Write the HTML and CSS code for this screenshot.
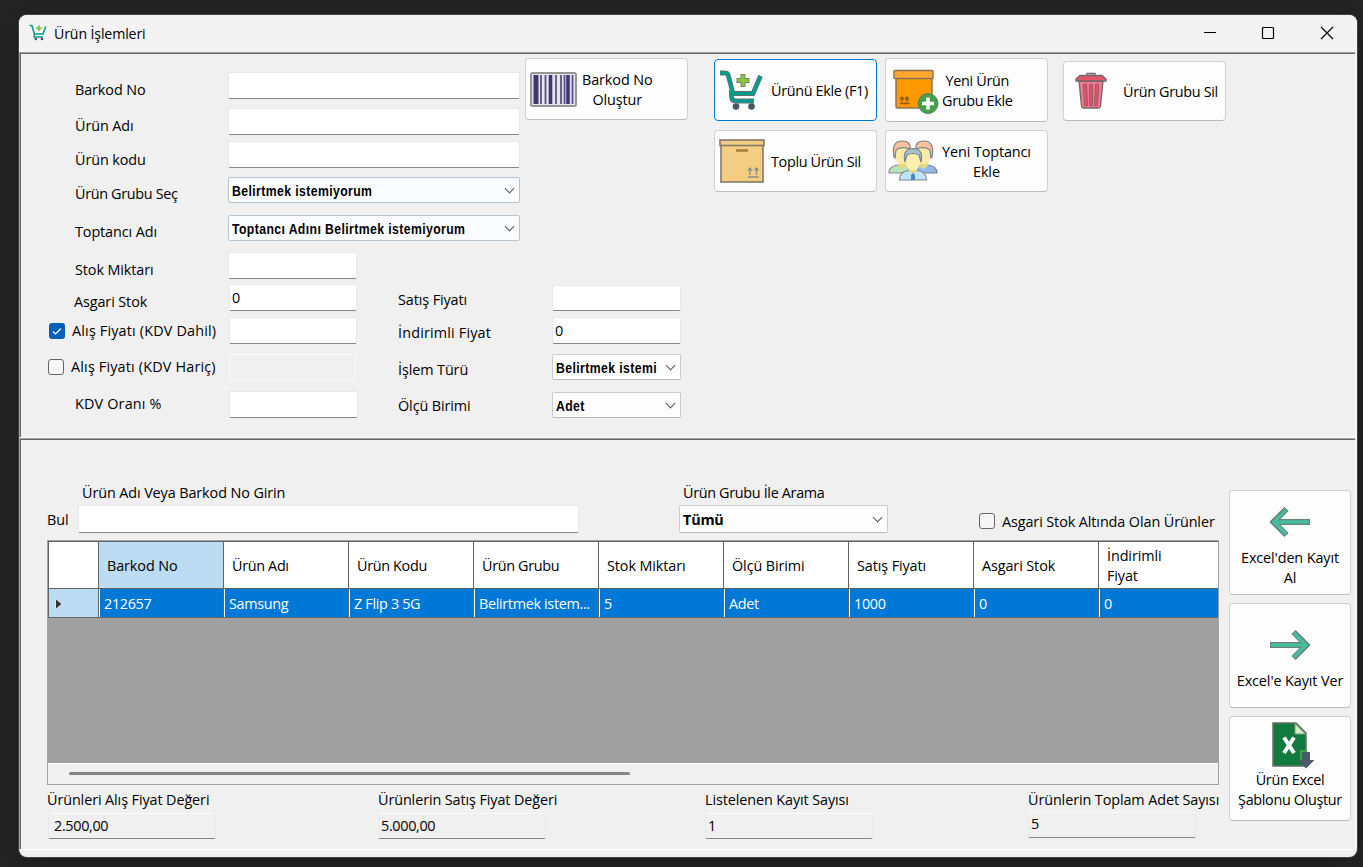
FILE: index.html
```html
<!DOCTYPE html>
<html lang="tr">
<head>
<meta charset="utf-8">
<title>Ürün İşlemleri</title>
<link rel="stylesheet" href="styles.css">
</head>
<body>
<svg class="defs" width="0" height="0">
  <symbol id="cart" viewBox="0 0 44 40">
    <path d="M1 3h5q2.500 0 3.300 2.500L14 23.500H34L41.500 6" fill="none" stroke="#69716f" stroke-width="4.800"/>
    <path d="M12.500 20v6.500q0 4.500 4.500 4.500H35" fill="none" stroke="#69716f" stroke-width="4.800"/>
    <path d="M1 3h5q2.500 0 3.300 2.500L14 23.500H34L41.500 6" fill="none" stroke="#009d8d" stroke-width="3.200"/>
    <path d="M12.500 20v6.500q0 4.500 4.500 4.500H35" fill="none" stroke="#009d8d" stroke-width="3.200"/>
    <path d="M24 4v13M17.500 10.500h13" stroke="#77836a" stroke-width="5"/>
    <path d="M24 5v11M18.500 10.500h11" stroke="#8cc63f" stroke-width="3.200"/>
    <circle cx="17" cy="36.500" r="3.300" fill="#465763"/><circle cx="32.500" cy="36.500" r="3.300" fill="#465763"/>
  </symbol>
</svg>
<main class="window">
  <header class="titlebar">
    <svg class="app-icon" width="18" height="17" viewBox="0 0 18 17"><path d="M.500 1.500h2.300L5.500 10H14l2.800-7.500M5.200 10v3H14" fill="none" stroke="#0a9c8f" stroke-width="1.600"/><path d="M10 1.500v5.500M7.200 4.200h5.600" stroke="#8cc63f" stroke-width="1.900"/><circle cx="6.800" cy="15" r="1.300" fill="#465763"/><circle cx="13" cy="15" r="1.300" fill="#465763"/></svg>
    <h1 class="title">Ürün İşlemleri</h1>
    <div class="controls">
      <svg width="14" height="14" viewBox="0 0 14 14"><path d="M2 6.500h12" stroke="#000"/></svg>
      <svg width="14" height="14" viewBox="0 0 14 14"><rect x="1.500" y="1.500" width="11" height="11" rx="1" fill="none" stroke="#000" stroke-width="1.200"/></svg>
      <svg width="14" height="14" viewBox="0 0 14 14"><path d="M1 1l12 12M13 1L1 13" stroke="#000" stroke-width="1.200"/></svg>
    </div>
  </header>

  <section class="panel entry">
    <div class="form">
      <div class="form-top">
        <div class="fields fields-main">
          <label class="t d7">Barkod No</label><div class="input"></div>
          <label class="t d7">Ürün Adı</label><div class="input"></div>
          <label class="t d8">Ürün kodu</label><div class="input"></div>
          <label class="t d6 n">Ürün Grubu Seç</label>
          <div class="select cool"><span>Belirtmek istemiyorum</span><i class="chev"></i></div>
          <label class="t d6">Toptancı Adı</label>
          <div class="select cool"><span>Toptancı Adını Belirtmek istemiyorum</span><i class="chev"></i></div>
        </div>
        <button class="btn barcode">
          <svg width="47" height="35" viewBox="0 0 47 35"><rect x="1" y="1" width="45" height="33" rx="1.500" fill="#e4e4ec" stroke="#969696" stroke-width="2"/><path d="M5.500 3v29M6.500 3v29" stroke="#42366e" stroke-width="4"/><path d="M11 3v29M15.500 3v29M26 3v29M31 3v29M34.500 3v29M42.500 3v29" stroke="#5a5088" stroke-width="1.800"/><path d="M20.500 3v29M38 3v29" stroke="#42366e" stroke-width="3.600"/></svg>
          <span class="t c">Barkod No<br>Oluştur</span>
        </button>
      </div>
      <div class="fields fields-stock">
        <label class="t d7">Stok Miktarı</label><div class="input"></div><span></span><span></span>
        <label class="t d7 asgari">Asgari Stok</label><div class="input t in">0</div>
        <label class="t d5">Satış Fiyatı</label><div class="input low"></div>
        <label class="t d3 check w"><i class="box on"><svg width="16" height="16" viewBox="0 0 16 16"><path d="M4 8.500l2.500 2.500L12 5.500" fill="none" stroke="#fff" stroke-width="1.200"/></svg></i>Alış Fiyatı (KDV Dahil)</label><div class="input in"></div>
        <label class="t d5 w">İndirimli Fiyat</label><div class="input t near">0</div>
        <label class="t d2 check w"><i class="box"></i>Alış Fiyatı (KDV Hariç)</label><div class="input disabled"></div>
        <label class="t d5">İşlem Türü</label><div class="select"><span>Belirtmek istemi</span><i class="chev"></i></div>
        <label class="t d2 w">KDV Oranı %</label><div class="input shift"></div>
        <label class="t d4">Ölçü Birimi</label><div class="select low"><span>Adet</span><i class="chev"></i></div>
      </div>
    </div>
    <div class="actions">
      <div class="action-col first">
        <button class="btn primary"><svg width="44" height="40"><use href="#cart"/></svg><span class="t n">Ürünü Ekle (F1)</span></button>
        <button class="btn bulk">
          <svg width="46" height="44" viewBox="0 0 46 44"><rect x="2" y="4" width="42" height="39" fill="#f3cd82" stroke="#827a68" stroke-width="1.600"/><rect x="1" y="1" width="44" height="5.500" fill="#f3cd82" stroke="#827a68" stroke-width="1.600"/><path d="M17 11.500h12" stroke="#a57c40" stroke-width="2.400"/><path d="M31 36v-6M37.500 36v-6M29 38h10.500M29 31.500l2-2.500 2 2.500M35.500 31.500l2-2.500 2 2.500" fill="none" stroke="#8d8c82" stroke-width="1.300"/></svg>
          <span class="t n">Toplu Ürün Sil</span></button>
      </div>
      <div class="action-col second">
        <button class="btn tall">
          <svg width="46" height="45" viewBox="0 0 46 45"><rect x="3" y="5" width="36" height="34" rx="1.500" fill="#ff9800" stroke="#8a7558" stroke-width="1.500"/><rect x="1" y="1.500" width="39" height="8" rx="1" fill="#ffa72e" stroke="#8a7558" stroke-width="1.500"/><path d="M9 33v-4M14 33v-4M7 34.500h9.500M7 30.500l2-2.500 2 2.500M12 30.500l2-2.500 2 2.500" fill="none" stroke="#8f5718" stroke-width="1.300"/><circle cx="35" cy="34.500" r="10" fill="#43a047" stroke="#5e8661"/><path d="M35 28.500v12M29 34.500h12" stroke="#fff" stroke-width="3.600"/></svg>
          <span class="t c n">Yeni Ürün<br>Grubu Ekle</span></button>
        <button class="btn people">
          <svg width="50" height="41" viewBox="0 0 50 41" stroke="#7d8589" stroke-width="1.200">
            <path d="M1 33q0-7 9-8l3-2 7 1 3 9z" fill="#bce2b8"/><path d="M49 33q0-7-9-8l-3-2-7 1-3 9z" fill="#90b9ee"/>
            <path d="M10 22h8v4l-4 3-4-2zM32 22h8v4l-4 3-4-2z" fill="#e8d781" stroke="none"/>
            <ellipse cx="14" cy="14" rx="7.500" ry="10.500" fill="#faeaa8" stroke="none"/><ellipse cx="36" cy="14" rx="7.500" ry="10.500" fill="#faeaa8" stroke="none"/>
            <path d="M6 17Q3 1 14 1q9 0 8 8-9-3-14 1l-1 8z" fill="#ffc09c"/><path d="M44 17Q47 1 36 1q-9 0-8 8 9-3 14 1l1 8z" fill="#ffc09c"/>
            <path d="M11.500 40q0-8 8.500-9.500h10q8.500 1.500 8.500 9.500z" fill="#bee4ff"/><path d="M21 27h8v4l-4 3-4-3z" fill="#e8d781" stroke="none"/><ellipse cx="25" cy="21" rx="7.500" ry="9.500" fill="#fdf0ae" stroke="none"/><path d="M17 22Q14 9 25 8.500 36 9 33 22l-2-7q-7-3-12 0z" fill="#a9bfd3"/><path d="M25 33l2 2v5h-4v-5z" fill="#4788c7" stroke="none"/>
          </svg>
          <span class="t c">Yeni Toptancı<br>Ekle</span></button>
      </div>
      <div class="action-col third">
        <button class="btn trash">
          <svg width="32" height="37" viewBox="0 0 32 37" stroke="#76656a" stroke-width="1.300"><path d="M12 4V1.500h8V4" fill="#ddd"/><path d="M4 9h24l-2.500 25q-.3 2-2 2h-15q-1.700 0-2-2z" fill="#f27a90"/><path d="M1 9V7l4-3.500h22L31 7v2z" fill="#e25469"/><path d="M10 13.500l1 19M16 13.500v19M22 13.500l-1 19" stroke="#8c5966" stroke-width="4" stroke-linecap="round"/><path d="M10 13.500l1 19M16 13.500v19M22 13.500l-1 19" stroke="#e0536b" stroke-width="2.400" stroke-linecap="round"/></svg>
          <span class="t n">Ürün Grubu Sil</span></button>
      </div>
    </div>
  </section>

  <section class="panel listing">
    <div class="main">
      <div class="search">
        <span class="t find-label">Bul</span>
        <div class="find"><label class="t">Ürün Adı Veya Barkod No Girin</label><div class="input"></div></div>
        <div class="group"><label class="t n">Ürün Grubu İle Arama</label><div class="select big"><span>Tümü</span><i class="chev"></i></div></div>
        <label class="t check low-stock"><i class="box"></i><span>Asgari Stok Altında Olan Ürünler</span></label>
      </div>
      <div class="table">
        <div class="row head t">
          <div></div><div class="sel">Barkod No</div><div class="n">Ürün Adı</div><div class="n">Ürün Kodu</div><div class="n">Ürün Grubu</div><div>Stok Miktarı</div><div>Ölçü Birimi</div><div>Satış Fiyatı</div><div>Asgari Stok</div><div>İndirimli<br>Fiyat</div>
        </div>
        <div class="row data t n">
          <div class="marker"><svg width="10" height="14" viewBox="0 0 10 14"><path d="M1.500 1.500v11L8 7z" fill="#333" stroke="#e8e8e8"/></svg></div><div>212657</div><div>Samsung</div><div>Z Flip 3 5G</div><div>Belirtmek istem...</div><div>5</div><div>Adet</div><div>1000</div><div>0</div><div>0</div>
        </div>
        <div class="void"></div>
        <div class="scroll"><div class="thumb"></div></div>
      </div>
      <div class="totals">
        <div><label class="t">Ürünleri Alış Fiyat Değeri</label><div class="input ro t n inset">2.500,00</div></div>
        <div><label class="t">Ürünlerin Satış Fiyat Değeri</label><div class="input ro t n">5.000,00</div></div>
        <div><label class="t">Listelenen Kayıt Sayısı</label><div class="input ro t">1</div></div>
        <div><label class="t">Ürünlerin Toplam Adet Sayısı</label><div class="input ro t last">5</div></div>
      </div>
    </div>
    <aside class="side">
      <button class="btn"><svg width="40" height="32" viewBox="0 0 40 32"><path d="M3 16h37M16.500 3L3.500 16l13 13" fill="none" stroke="#69807b" stroke-width="6"/><path d="M4 16h35M16 4L4 16l12 12" fill="none" stroke="#46bd9d" stroke-width="3.600"/></svg><span class="t c">Excel'den Kayıt<br>Al</span></button>
      <button class="btn export"><svg width="40" height="32" viewBox="0 0 40 32"><path d="M0 16h37M23.500 3l13 13-13 13" fill="none" stroke="#69807b" stroke-width="6"/><path d="M1 16h35M24 4l12 12-12 12" fill="none" stroke="#46bd9d" stroke-width="3.600"/></svg><span class="t c">Excel'e Kayıt Ver</span></button>
      <button class="btn xls"><svg width="42" height="47" viewBox="0 0 42 47"><path d="M1 1h23l10 10v33H1z" fill="#117b3f" stroke="#617166" stroke-width="1.500"/><path d="M23 1.500V12h10.500z" fill="#d7ebc9" stroke="#7f967e"/><path d="M12 15.500l10 15.500M22 15.500L12 31" stroke="#fff" stroke-width="4"/><path d="M29 38v-9h6" fill="none" stroke="#43a047" stroke-width="2"/><path d="M30.500 30h7.500v8h4.500l-8.500 8.500L25.500 38h5z" fill="#4b5b67"/></svg><span class="t c n">Ürün Excel<br>Şablonu Oluştur</span></button>
    </aside>
  </section>
</main>
</body>
</html>
```
FILE: styles.css
```css
* { box-sizing: border-box; }
body { margin: 0; height: 867px; overflow: hidden; background: #252525; padding: 15px 6px 10px 19px; color: #000; font-family: "Open Sans", "Noto Sans", sans-serif; }
.defs { display: none; }
.t { font-size: 14.4px; line-height: 20px; letter-spacing: -0.1px; white-space: nowrap; }
.n { letter-spacing: -0.33px; }
.w { letter-spacing: 0.17px; }
.c { text-align: center; }
.window { width: 1338px; height: 842px; background: #f0f0f0; border-radius: 8px; overflow: hidden; display: flex; flex-direction: column; box-shadow: 0 0 0 1px #444, 0 4px 20px #1a1a1a; }
.titlebar { height: 37px; background: #f3f3f3; display: flex; align-items: center; padding: 0 23px 2px 10px; flex: none; }
.title { margin: 1px 0 0 7px; font-size: 14.200px; font-weight: 400; letter-spacing: -0.15px; }
.controls { margin-left: auto; display: flex; gap: 45px; }
.panel { border: 1px solid #a0a0a0; border-right-color: #fff; border-bottom-color: #fff; box-shadow: inset 1px 1px #696969; display: flex; padding: 1px 0 0 1px; margin-right: 1px; }
.entry { height: 386px; flex: none; }
.listing { height: 412px; flex: none; }

.form { width: 666px; padding: 4px 0 0 27px; }
.form-top { display: flex; gap: 5px; }
.fields { display: grid; align-items: start; }
.fields-main { margin-top: 14px; grid-template-columns: 180px 292px; grid-template-rows: 36px 33px 36px 38px 37px; }
.fields-stock { grid-template-columns: 180px 170px 154px 129px; grid-template-rows: 32px 33px 37px 37px 28px; }
.fields label { padding-left: 27px; }
.fields label.asgari { padding-left: 26px; }
.fields label.check { padding-left: 0; }
.fields-stock label:nth-child(4n+3) { padding-left: 0; }
.fields-stock .input { width: 129px; }
.fields-stock .in { width: 128px; margin-left: 1px; }
.fields-stock .shift { margin-left: 1px; }
.d2 { margin-top: 3px; } .d3 { margin-top: 4px; } .d4 { margin-top: 5px; } .d5 { margin-top: 6px; } .d6 { margin-top: 7px; } .d7 { margin-top: 8px; } .d8 { margin-top: 9px; }
.input { height: 27px; background: #fff; border: 1px solid #e7e7e7; border-bottom-color: #868686; border-radius: 2px; padding: 3px 2px; }
.input.low, .select.low { margin-top: 1px; }
.input.low { height: 26px; }
.fields-stock .disabled { height: 26px; margin-left: 1px; width: 127px; background: #f0f0f0; border: 1px solid #fafafa; }
.select { height: 26px; background: #fdfdfd; border: 1px solid #ccc; border-bottom-color: #bababa; border-radius: 2px; display: flex; align-items: center; justify-content: space-between; padding: 0 6px 0 3px; font: bold 15px "Liberation Sans", Arial, sans-serif; letter-spacing: 0.5px; white-space: nowrap; }
.select span { width: 0; transform: scaleX(0.815); transform-origin: left; padding-top: 1px; }
.select.cool { border-color: #b4c5d4; background: #fafcff; }
.select.big { height: 28px; font: bold 14.400px "Open Sans", sans-serif; letter-spacing: -0.2px; }
.select.big span { transform: none; }
.chev { width: 7px; height: 7px; border: solid #555; border-width: 0 1px 1px 0; transform: translateY(-2px) rotate(45deg); flex: none; }
.check { display: flex; align-items: center; gap: 7px; }
.box { width: 16px; height: 16px; border: 1px solid #666; border-radius: 3px; background: #f6f6f6; flex: none; }
.box.on { background: #005fb8; border: 0; margin-left: 1px; }
.box svg { display: block; }

.btn { background: #fdfdfd; border: 1px solid #d0d0d0; border-bottom-color: #bbb; border-radius: 4px; padding: 0; margin: 0; color: #000; font-family: inherit; display: flex; align-items: center; flex: none; }
.btn svg { flex: none; }
.entry .btn .t { padding-top: 2px; }
.barcode { width: 163px; height: 62px; padding-left: 4px; gap: 5px; }
.actions { display: flex; padding-left: 27px; }
.action-col { display: flex; flex-direction: column; gap: 8px; }
.action-col .btn { width: 163px; height: 62px; }
.first { padding-top: 5px; gap: 9px; margin-right: 8px; }
.second { padding-top: 4px; margin-right: 15px; }
.third { padding-top: 7px; }
.action-col .tall { height: 64px; padding: 3px 0 0 7px; gap: 3px; }
.tall .t { margin-top: -3px; }
.action-col .primary { border-color: #0078d4; padding-left: 4px; gap: 8px; }
.bulk { padding-left: 4px; gap: 6px; }
.people { padding-left: 2px; gap: 4px; }
.people svg { margin-top: -1px; }
.action-col .trash { height: 60px; padding-left: 11px; gap: 16px; }
.trash svg { margin-top: -2px; }

.listing { padding: 1px 0 0 27px; }
.main { width: 1172px; margin-right: 10px; }
.search { display: flex; height: 100px; padding-top: 43px; }
.find-label { width: 31px; margin-top: 27px; }
.find { width: 501px; margin-right: 100px; }
.find .input { height: 28px; margin-top: 2px; }
.find label { display: block; padding-left: 4px; }
.group { width: 209px; }
.group label { display: block; margin: 0 0 2px 4px; }
.low-stock { height: 20px; margin: 28px 0 0 91px; }
.low-stock span { padding-top: 2px; }
.table { height: 245px; border: 1px solid #a0a0a5; display: flex; flex-direction: column; overflow: hidden; }
.row { display: grid; grid-template-columns: 51px repeat(8, 125px) 1fr; flex: none; }
.head { height: 48px; background: #fff; border: solid #646464; border-width: 1px 0 1px 1px; grid-template-columns: 50px repeat(8, 125px) 1fr; }
.row > div { display: flex; align-items: center; border-right: 1px solid #646464; }
.row > div:last-child { border-right: 0; }
.head > div { padding: 1px 0 0 8px; }
.head .sel { background: #bcdcf4; }
.data { height: 29px; border-bottom: 1px solid #646464; color: #fff; }
.data > div { background: #0078d7; border-left: 1px solid #fff; padding: 2px 0 0 4px; }
.data .marker { background: #bcdcf4; border-left-color: #646464; padding-left: 5px; }
.marker svg { flex: none; }
.void { flex: 1; background: #a0a0a0; }
.scroll { height: 21px; border-top: 1px solid #fff; padding: 8px 0 0 21px; }
.thumb { width: 561px; height: 3px; border-radius: 2px; background: #858585; }
.totals { display: grid; grid-template-columns: 331px 327px 323px 191px; padding-top: 5px; }
.totals label { display: block; height: 23px; }
.totals .input { width: 168px; height: 26px; background: #f0f0f0; border-color: #fafafa #e8e8e8 #868686; padding-top: 2px; }
.totals .inset { margin-left: 1px; padding-left: 5px; }
.totals .last { padding-top: 1px; margin-top: -1px; }
.side { display: flex; flex-direction: column; gap: 8px; padding-top: 50px; }
.side .btn { width: 122px; height: 105px; flex-direction: column; padding-top: 15px; gap: 10px; }
.side .export { padding-top: 25px; }
.side .xls { padding: 5px 0 0; gap: 1px; }
.xls svg { margin-left: 6px; }
```
